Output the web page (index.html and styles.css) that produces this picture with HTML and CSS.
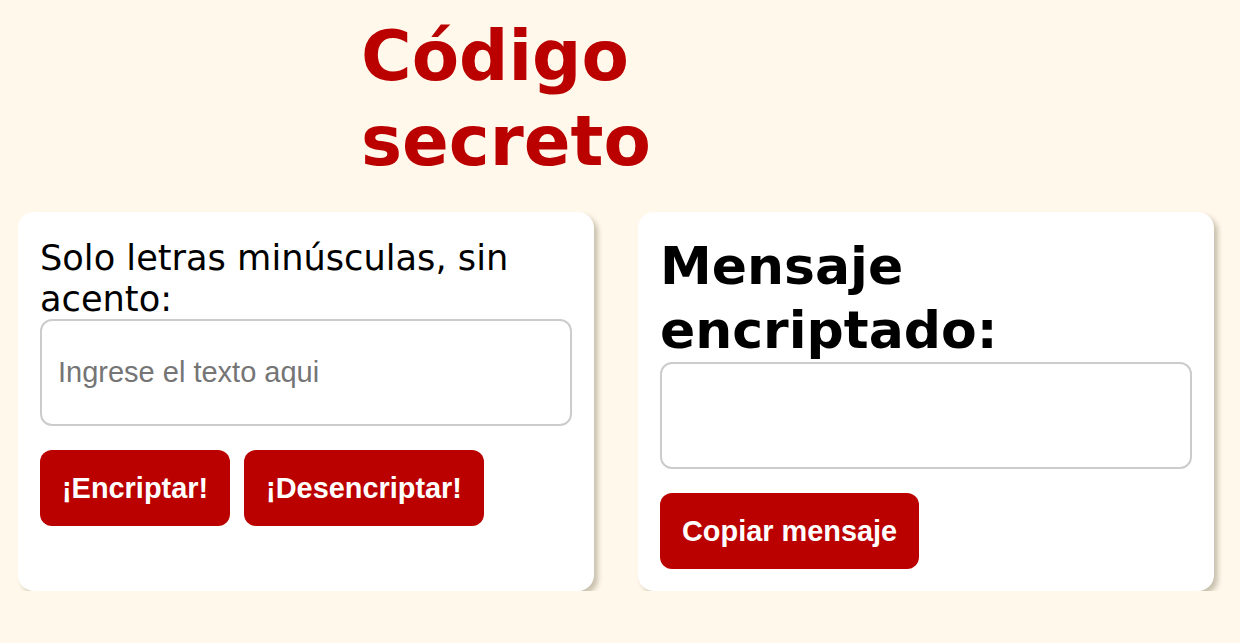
FILE: index.html
```html
<!DOCTYPE html>
<html lang="es">
<head>
<meta charset="utf-8">
<title>Código secreto</title>
<link rel="stylesheet" href="styles.css">
</head>
<body>
<header class="header">
  <h1 class="title">Código secreto</h1>
</header>
<main class="panels">
  <section class="card">
    <label class="prompt" for="entrada">Solo letras minúsculas, sin acento:</label>
    <textarea id="entrada" class="field" rows="1" placeholder="Ingrese el texto aqui"></textarea>
    <div class="actions">
      <button class="btn" type="button">¡Encriptar!</button>
      <button class="btn" type="button">¡Desencriptar!</button>
    </div>
  </section>
  <section class="card">
    <h2 class="result-title">Mensaje encriptado:</h2>
    <textarea class="field" rows="1" readonly></textarea>
    <div class="actions">
      <button class="btn" type="button">Copiar mensaje</button>
    </div>
  </section>
</main>
</body>
</html>
```

FILE: styles.css
```css
* {
  box-sizing: border-box;
}

body {
  margin: 0;
  background: #fff8eb;
  font-family: "DejaVu Sans", sans-serif;
  color: #000;
}

.header {
  padding: 14px 0 0 361px;
}

.title {
  margin: 0;
  width: 320px;
  font-size: 69px;
  line-height: 85px;
  font-weight: bold;
  color: #bb0000;
}

.panels {
  display: grid;
  grid-template-columns: 576px 576px;
  gap: 44px;
  padding: 28px 18px 0;
}

.card {
  display: flex;
  flex-direction: column;
  align-items: stretch;
  background: #fff;
  border-radius: 16px;
  padding: 22px 22px 22px;
  box-shadow: 4px 4px 5px rgba(90, 80, 50, 0.32);
}

.prompt {
  display: block;
  margin-top: 3px;
  font-size: 35.2px;
  line-height: 41px;
}

.result-title {
  margin: 0;
  font-size: 52px;
  line-height: 64px;
  font-weight: bold;
}

.field {
  display: block;
  width: 100%;
  height: 107px;
  padding: 35px 16px;
  border: 2px solid #cccccc;
  border-radius: 12px;
  font-family: "Liberation Sans", Arial, sans-serif;
  font-size: 29px;
  resize: none;
  outline: none;
  background: #fff;
}

.field::placeholder {
  color: #757575;
}

.actions {
  display: flex;
  gap: 14px;
  margin-top: 24px;
}

.btn {
  height: 76px;
  padding: 0 22px;
  border: none;
  border-radius: 12px;
  background: #bb0000;
  color: #fff;
  font-family: "Liberation Sans", Arial, sans-serif;
  font-size: 28.9px;
  font-weight: bold;
  cursor: pointer;
}
```
